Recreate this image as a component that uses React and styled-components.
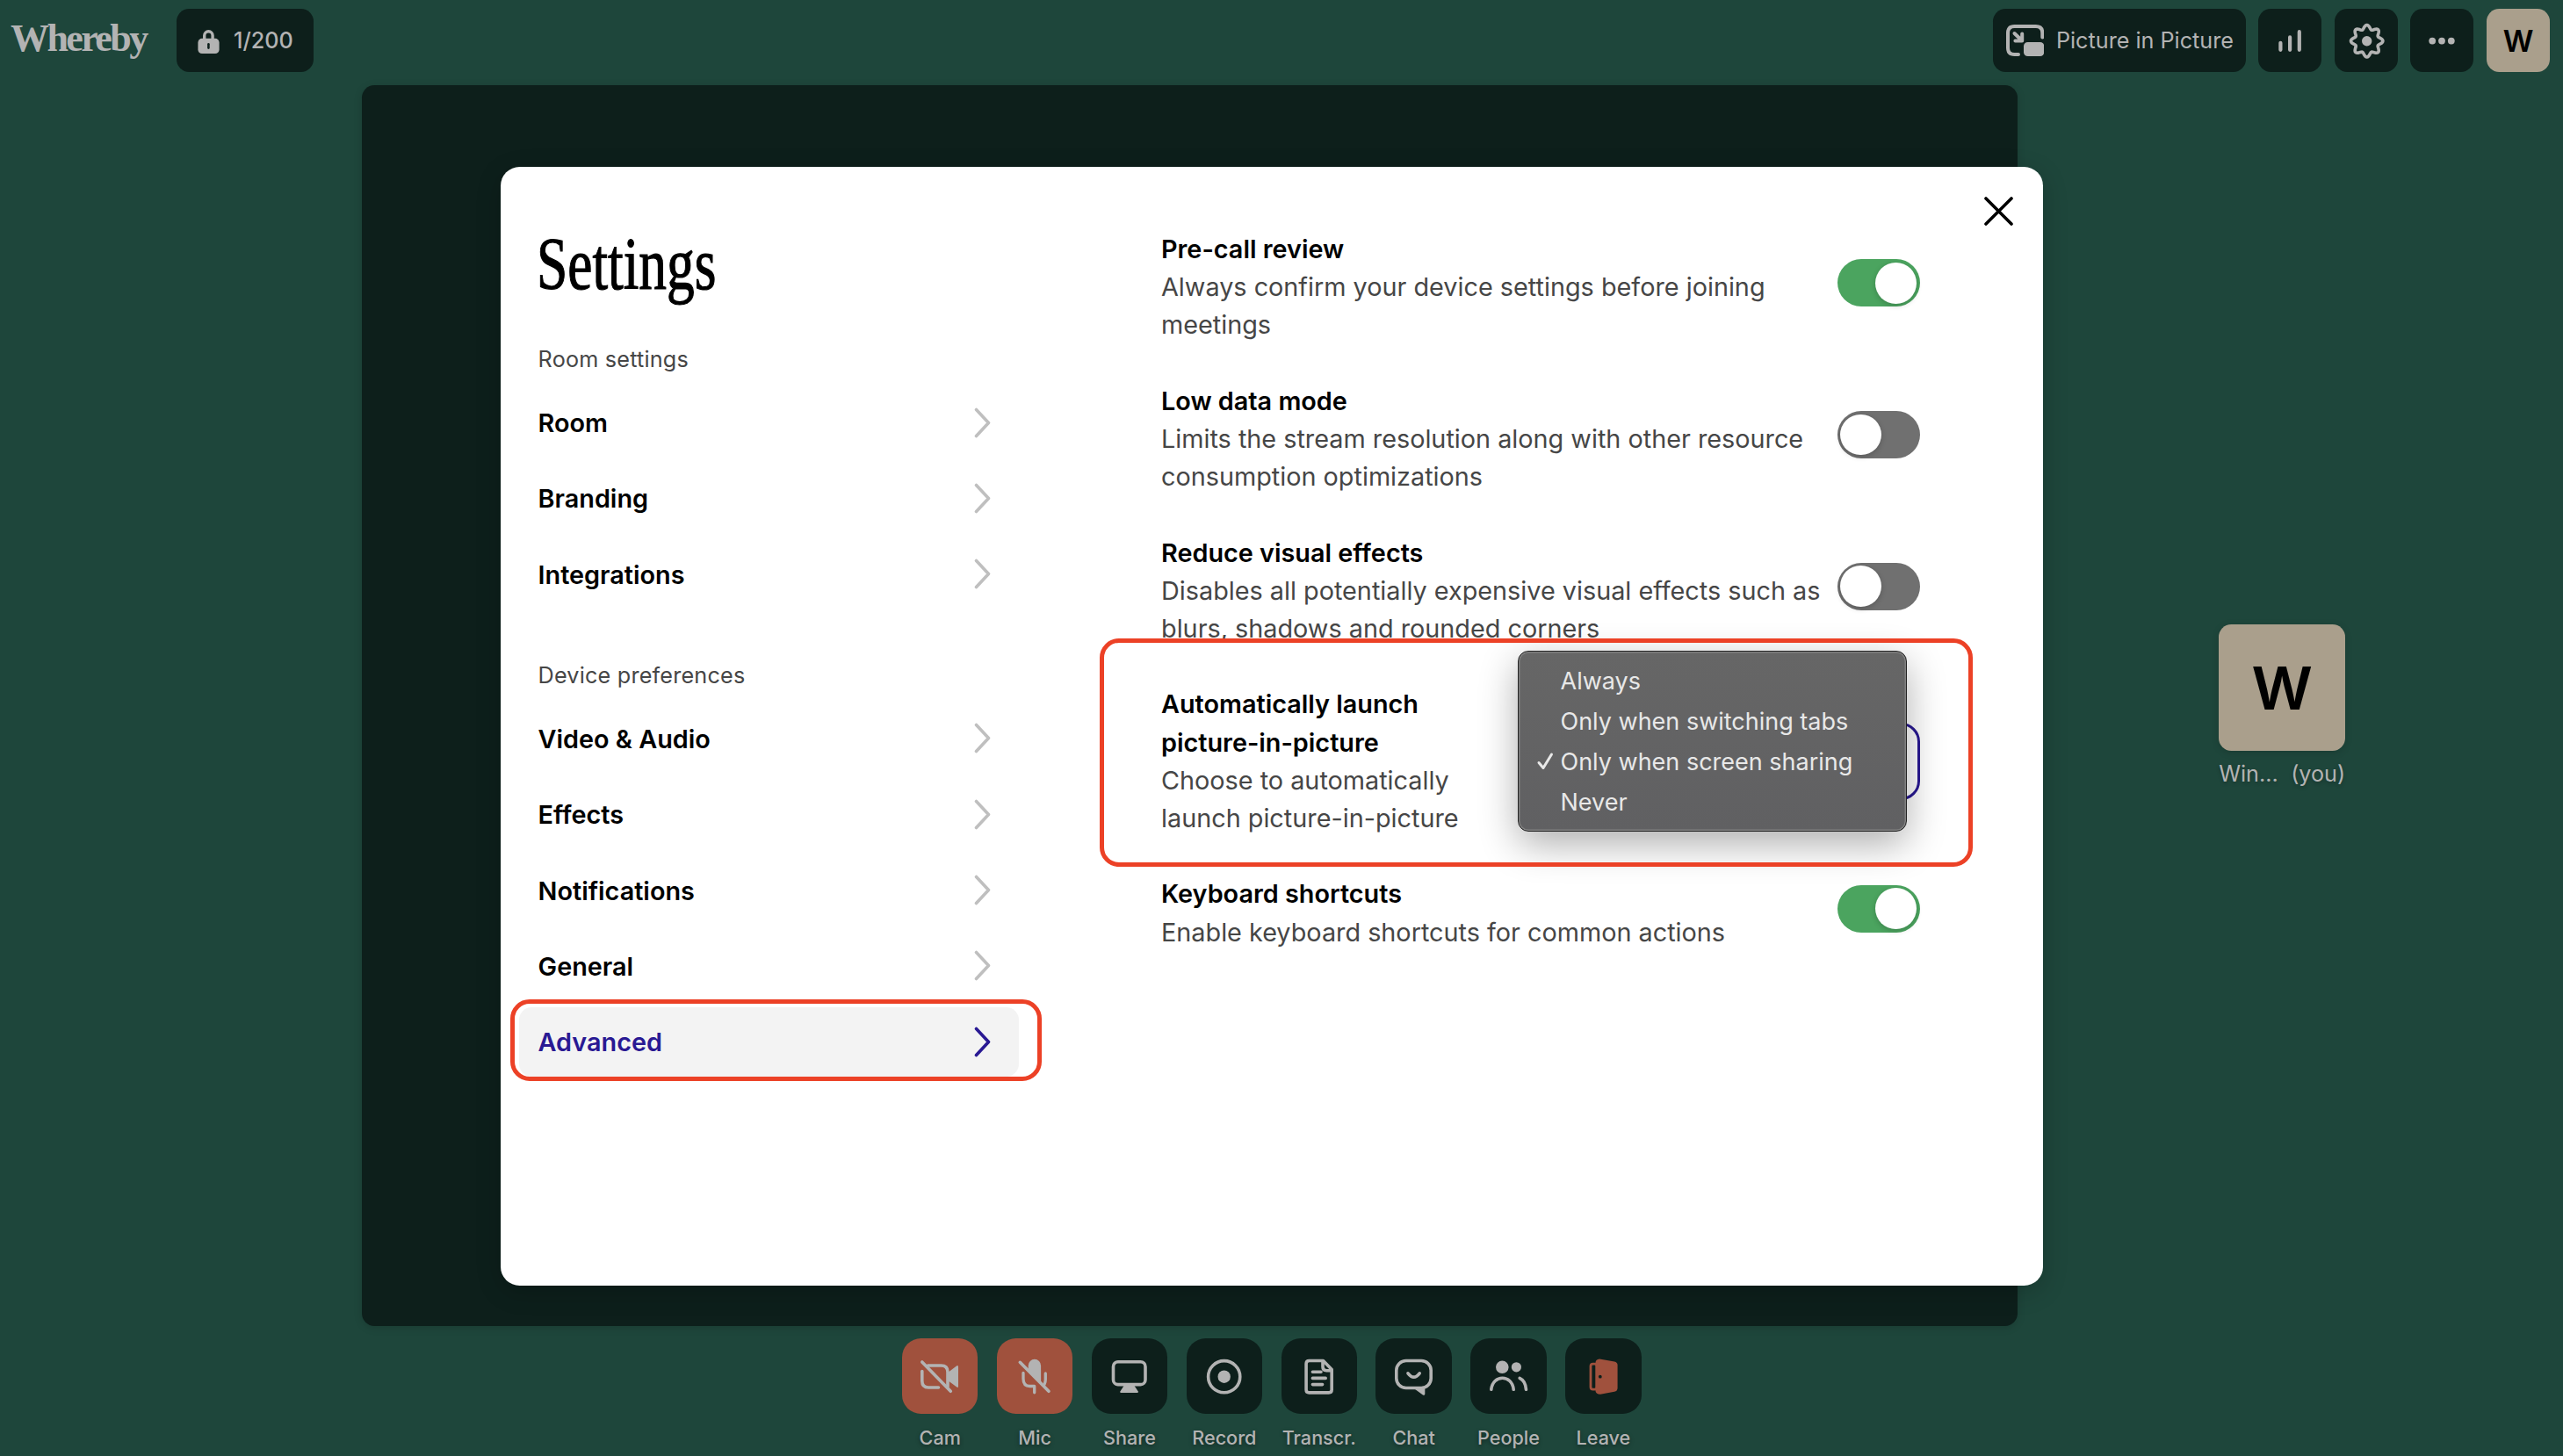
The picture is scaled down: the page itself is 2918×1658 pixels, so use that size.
import React from 'react';
import styled, { createGlobalStyle } from 'styled-components';

const GlobalStyle = createGlobalStyle`
  * {
    box-sizing: border-box;
  }

  body {
    margin: 0;
    background-color: #1e463b;
    font-family: Inter, 'Liberation Sans', sans-serif;
    color: #b3b3b3;
    overflow: hidden;
  }

  svg {
    display: block;
    fill: none;
    stroke-linecap: round;
    stroke-linejoin: round;
  }
`;

const Page = styled.div`
  display: flex;
  flex-direction: column;
  width: 2918px;
  height: 1658px;
`;

/* top bar */

const Header = styled.header`
  display: flex;
  align-items: flex-start;
  height: 97px;
  padding: 10px 15px 0 12px;
`;

const Logo = styled.div`
  width: 189px;
  font-family: 'Liberation Serif', serif;
  font-weight: 700;
  font-size: 44px;
  line-height: 50px;
  letter-spacing: -2.6px;
  margin-top: 9px;
`;

const HeaderButton = styled.div`
  display: flex;
  align-items: center;
  flex: none;
  width: ${props => props.$width || 72}px;
  height: 72px;
  border-radius: 14.4px;
  background-color: #0d1f1b;
  font-size: 25.2px;
  font-weight: ${props => props.$weight || 400};
  white-space: nowrap;
`;

const HeaderActions = styled.div`
  display: flex;
  gap: 14.6px;
  margin-left: auto;
`;

const PipIcon = styled.svg`
  margin: 0 14px 0 15px;
`;

const Avatar = styled.div`
  display: flex;
  align-items: center;
  justify-content: center;
  width: ${props => props.$size}px;
  height: ${props => props.$size}px;
  border-radius: 14.4px;
  background-color: #aa9f8c;
  color: #000;
  font-size: ${props => props.$font}px;
  font-weight: 600;
`;

/* call area */

const Main = styled.main`
  display: flex;
  height: 1413px;
  padding-left: 412px;
`;

const Stage = styled.div`
  width: 1885px;
  border-radius: 14.4px;
  background-color: #0d1f1b;
  box-shadow: 0 2px 10px rgba(0, 0, 0, 0.15);
`;

const Participant = styled.div`
  width: 144px;
  margin: 613.6px 0 0 229.2px;

  ${Avatar} {
    box-shadow: 0 2px 8px rgba(0, 0, 0, 0.15);
  }
`;

const ParticipantName = styled.div`
  display: flex;
  justify-content: space-between;
  margin-top: 8px;
  font-size: 25.2px;
  line-height: 36px;
  white-space: nowrap;
  text-shadow: 0 2px 4px rgba(0, 0, 0, 0.25);
`;

/* bottom toolbar */

const Toolbar = styled.nav`
  display: flex;
  gap: 21.5px;
  padding: 14px 0 0 1027px;
`;

const ToolbarItem = styled.div`
  display: flex;
  flex-direction: column;
  align-items: center;
  width: 86.4px;
`;

const ToolbarTile = styled.div`
  width: 86.4px;
  height: 86.4px;
  border-radius: 21.6px;
  background-color: ${props => (props.$off ? '#a0513d' : '#0d1f1b')};
`;

const ToolbarLabel = styled.span`
  margin-top: 12.5px;
  font-size: 21.6px;
  font-weight: 500;
  line-height: 28px;
  white-space: nowrap;
  text-shadow: 0 2px 5px rgba(0, 0, 0, 0.4);
`;

/* settings dialog */

const Dialog = styled.div`
  position: absolute;
  top: 190px;
  left: 570px;
  display: flex;
  align-items: flex-start;
  width: 1756px;
  height: 1274px;
  border-radius: 21.6px;
  background-color: #fff;
  color: #000;
  box-shadow: 0 7px 29px rgba(0, 0, 0, 0.2);
`;

const Sidebar = styled.aside`
  width: 569px;
  margin: 64px 0 0 21px;
`;

const Title = styled.h1`
  width: 280px;
  height: 136.8px;
  margin: 0 0 0 20px;
  font-family: 'Liberation Serif', serif;
  font-size: 84px;
  font-weight: 400;
  line-height: 93px;
  transform: scaleX(0.755);
  transform-origin: left;
  -webkit-text-stroke: 1.2px #000;
`;

const NavHeading = styled.div`
  margin-bottom: 15.2px;
  padding-left: 21.6px;
  font-size: 25.2px;
  line-height: 36px;
  letter-spacing: 0.2px;
  color: #464646;
`;

const NavList = styled.div`
  display: flex;
  flex-direction: column;
  gap: 7.2px;
  margin-bottom: 56.6px;
`;

const NavItem = styled.div`
  position: relative;
  display: flex;
  align-items: center;
  justify-content: space-between;
  height: 79.2px;
  padding: 0 31px 0 21.6px;
  border-radius: 14.4px;
  background-color: ${props => (props.$active ? '#f3f3f3' : 'transparent')};
  color: ${props => (props.$active ? '#291993' : '#000')};
  font-size: 28.8px;
  font-weight: 600;

  svg {
    stroke: ${props => (props.$active ? '#291993' : '#bfbfbf')};
  }
`;

const Content = styled.section`
  display: flex;
  flex-direction: column;
  gap: 43.2px;
  width: 863.6px;
  margin: 72px 0 0 162px;
`;

const SettingRow = styled.div`
  position: relative;
  display: flex;
  align-items: center;
  justify-content: space-between;
`;

const SettingText = styled.div`
  font-size: 28.8px;
  line-height: 43.2px;
  color: #464646;
  white-space: pre;

  strong {
    display: block;
    font-weight: 600;
    color: #000;
  }
`;

const Switch = styled.div`
  display: flex;
  justify-content: ${props => (props.$on ? 'flex-end' : 'flex-start')};
  width: 94px;
  height: 54px;
  margin-bottom: 9.4px;
  padding: 3.6px;
  border-radius: 27px;
  background-color: ${props => (props.$on ? '#4ba45f' : '#707070')};

  &::after {
    content: '';
    width: 46.8px;
    height: 46.8px;
    border-radius: 50%;
    background-color: #fff;
    box-shadow: 0 2px 6px rgba(0, 0, 0, 0.2);
  }
`;

const SelectBox = styled.div`
  width: 456px;
  height: 88px;
  border: 3px solid #291993;
  border-radius: 21.6px;
`;

const Menu = styled.div`
  position: absolute;
  top: -39.4px;
  left: 405.5px;
  width: 443.5px;
  height: 206px;
  padding: 10px 0;
  border: 1px solid #222;
  border-radius: 12px;
  background: linear-gradient(#666, #606062);
  box-shadow: inset 0 0 0 1.5px #808080, 0 14px 44px rgba(0, 0, 0, 0.32);
  color: #e8e8e8;
`;

const MenuItem = styled.div`
  display: flex;
  align-items: center;
  height: 46px;
  padding-left: 20px;
  font-size: 27px;
  white-space: nowrap;

  svg {
    stroke: #e8e8e8;
  }
`;

const MenuCheck = styled.span`
  flex: none;
  width: 28px;
`;

const CloseButton = styled.div`
  margin: 33.5px 0 0 73.4px;
`;

const Highlight = styled.div`
  position: absolute;
  top: ${props => props.$top}px;
  left: ${props => props.$left}px;
  width: ${props => props.$width}px;
  height: ${props => props.$height}px;
  border: 5px solid #ec4126;
  border-radius: 22px;
`;

const GREY = '#b3b3b3';

// eight lobed outline of the settings cog
const cogPath = () => {
  const points = [];
  for (let deg = 0; deg < 360; deg += 3) {
    const a = (deg * Math.PI) / 180;
    const r = 15.9 + 2.3 * Math.cos(8 * a);
    points.push(`${(36.7 + r * Math.cos(a)).toFixed(2)} ${(36.7 + r * Math.sin(a)).toFixed(2)}`);
  }
  return `M${points.join('L')}Z`;
};

const Chevron = () => (
  <svg width="20" height="36" viewBox="0 0 20 36" strokeWidth="3.6">
    <path d="M2.5 2.5 16.5 17.5 2.5 32.5" />
  </svg>
);

const TileIcon = ({ children }) => (
  <svg width="86.4" height="86.4" viewBox="0 0 86.4 86.4" stroke={GREY} strokeWidth="3.6">
    {children}
  </svg>
);

const tools = [
  {
    label: 'Cam',
    off: true,
    icon: (
      <>
        <path d="M22.8 27 55.3 60.3" />
        <path d="M22.8 37.5V48.5Q22.8 56 30 56H41.5M29.5 31H44.5Q52 31 52 38.5V55" />
        <path d="M51.5 39.5 62.3 31.3Q64 30.5 64 32.5V54.5Q64 56.8 62.3 55.6L51.5 47.5Z" fill={GREY} stroke="none" />
      </>
    ),
  },
  {
    label: 'Mic',
    off: true,
    icon: (
      <>
        <path d="M35.7 36V31A7.2 7.2 0 0 1 50.1 31V51.5Z" fill={GREY} stroke="none" />
        <path d="M26.3 27.3 59 60.3" />
        <path d="M30 39.5V46Q30 54.5 37.5 54.5H42.7V61.8M55.3 40V47Q55.3 50 54 52.5" strokeWidth="3.3" />
      </>
    ),
  },
  {
    label: 'Share',
    icon: (
      <>
        <rect x="24.5" y="26.8" width="36.5" height="25.8" rx="5.4" />
        <path d="M36.5 54H48.5L52.8 60.5Q53.2 62 51.8 62H33.2Q31.8 62 32.4 60.5Z" fill={GREY} stroke="none" />
      </>
    ),
  },
  {
    label: 'Record',
    icon: (
      <>
        <circle cx="42.7" cy="43.7" r="18.1" />
        <circle cx="42.7" cy="43.7" r="7.2" fill={GREY} stroke="none" />
      </>
    ),
  },
  {
    label: 'Transcr.',
    icon: (
      <>
        <path d="M32 25.5H47.5L57.2 35.5V58.5Q57.2 61.9 53.8 61.9H31.5Q28.1 61.9 28.1 58.5V29Q28.1 25.5 31.5 25.5Z" />
        <path d="M47 26V32.5Q47 36.7 51.2 36.7H56.5M35.4 38.2H45M35.4 45.4H50.2M35.4 52.6H46.6" />
      </>
    ),
  },
  {
    label: 'Chat',
    icon: (
      <>
        <rect x="23.8" y="25.5" width="39.4" height="31" rx="11" />
        <path d="M37 39.8Q43.6 48.5 50.2 39.8" />
        <path d="M43 56.5H56.3V63.5Q56 65.5 54 64.6Z" fill={GREY} stroke="none" />
      </>
    ),
  },
  {
    label: 'People',
    icon: (
      <>
        <circle cx="36.3" cy="32.8" r="7.3" fill={GREY} stroke="none" />
        <circle cx="52.4" cy="32.8" r="5.6" fill={GREY} stroke="none" />
        <path d="M23.8 58.3C25.5 40.9 47.6 40.9 49.2 58.3M56.2 45.3Q62.8 48.3 63.5 58.3" />
      </>
    ),
  },
  {
    label: 'Leave',
    icon: (
      <>
        <rect x="29" y="29.2" width="7" height="29" rx="2.6" stroke="#a0513d" strokeWidth="2.8" />
        <path
          d="M34.5 27.5Q34.8 24 39 23.5L56 26.6Q59.6 27.4 59.6 30.5V56.5Q59.6 59.8 56 60.8L40 63.7Q35 63.5 34.5 60Z"
          fill="#a0513d"
          stroke="none"
        />
        <circle cx="39.8" cy="43.7" r="1.9" fill="#0d1f1b" stroke="none" />
      </>
    ),
  },
];

const roomNav = ['Room', 'Branding', 'Integrations'];
const deviceNav = ['Video & Audio', 'Effects', 'Notifications', 'General', 'Advanced'];

const switches = [
  {
    name: 'Pre-call review',
    text: 'Always confirm your device settings before joining\nmeetings',
    on: true,
  },
  {
    name: 'Low data mode',
    text: 'Limits the stream resolution along with other resource\nconsumption optimizations',
    on: false,
  },
  {
    name: 'Reduce visual effects',
    text: 'Disables all potentially expensive visual effects such as\nblurs, shadows and rounded corners',
    on: false,
  },
];

const options = ['Always', 'Only when switching tabs', 'Only when screen sharing', 'Never'];

const TopBar = () => (
  <Header>
    <Logo>Whereby</Logo>
    <HeaderButton $width={156} $weight={500}>
      <svg width="65" height="72" viewBox="0 0 65 72">
        <path d="M31.7 35V30.5A4.7 4.7 0 0 1 41.1 30.5V35" stroke={GREY} strokeWidth="3.4" />
        <rect x="24.4" y="33.8" width="24.2" height="17.2" rx="4.6" fill={GREY} />
        <path d="M36.4 40.2V44.6" stroke="#0d1f1b" strokeWidth="2.6" />
      </svg>
      1/200
    </HeaderButton>
    <HeaderActions>
      <HeaderButton $width={288}>
        <PipIcon width="43.3" height="36" viewBox="0 0 43.3 36" stroke={GREY} strokeWidth="4">
          <path d="M41.3 14.5V9.5Q41.3 2 33.8 2H9.5Q2 2 2 9.5V26.5Q2 34 9.5 34H14" />
          <rect x="20" y="20" width="23.3" height="16" rx="4.6" fill={GREY} stroke="none" />
          <path d="M9.5 10 18 18.2M18.2 10.4V18.4H10.4" />
        </PipIcon>
        Picture in Picture
      </HeaderButton>
      <HeaderButton>
        <svg width="72" height="72" viewBox="0 0 72 72" stroke={GREY} strokeWidth="4.2">
          <path d="M25.4 38.8V46.8M36.1 32.4V46.8M46.8 26.2V46.8" />
        </svg>
      </HeaderButton>
      <HeaderButton>
        <svg width="72" height="72" viewBox="0 0 72 72" stroke={GREY} strokeWidth="3.6">
          <path d={cogPath()} />
          <circle cx="36.7" cy="36.7" r="5.7" fill={GREY} stroke="none" />
        </svg>
      </HeaderButton>
      <HeaderButton>
        <svg width="72" height="72" viewBox="0 0 72 72">
          <g fill={GREY}>
            <circle cx="25.2" cy="36.6" r="3.9" />
            <circle cx="36" cy="36.6" r="3.9" />
            <circle cx="46.8" cy="36.6" r="3.9" />
          </g>
        </svg>
      </HeaderButton>
      <Avatar $size={72} $font={34}>W</Avatar>
    </HeaderActions>
  </Header>
);

const Settings = () => (
  <Dialog>
    <Sidebar>
      <Title>Settings</Title>
      <NavHeading>Room settings</NavHeading>
      <NavList>
        {roomNav.map(name => (
          <NavItem key={name}>
            {name}
            <Chevron />
          </NavItem>
        ))}
      </NavList>
      <NavHeading>Device preferences</NavHeading>
      <NavList>
        {deviceNav.map(name => (
          <NavItem key={name} $active={name === 'Advanced'}>
            {name}
            <Chevron />
            {name === 'Advanced' && <Highlight $top={-9} $left={-10} $width={605} $height={93} />}
          </NavItem>
        ))}
      </NavList>
    </Sidebar>
    <Content>
      {switches.map(item => (
        <SettingRow key={item.name}>
          <SettingText>
            <strong>{item.name}</strong>
            {item.text}
          </SettingText>
          <Switch $on={item.on} />
        </SettingRow>
      ))}
      <SettingRow>
        <SettingText>
          <strong>{'Automatically launch\npicture-in-picture'}</strong>
          {'Choose to automatically\nlaunch picture-in-picture'}
        </SettingText>
        <SelectBox />
        <Menu>
          {options.map(option => (
            <MenuItem key={option}>
              <MenuCheck>
                {option === 'Only when screen sharing' && (
                  <svg width="22" height="22" viewBox="0 0 22 22" strokeWidth="3">
                    <path d="M3 12.5 8 18.5 17.5 3" />
                  </svg>
                )}
              </MenuCheck>
              {option}
            </MenuItem>
          ))}
        </Menu>
        <Highlight $top={-53.4} $left={-70} $width={994} $height={260} />
      </SettingRow>
      <SettingRow>
        <SettingText>
          <strong>Keyboard shortcuts</strong>
          Enable keyboard shortcuts for common actions
        </SettingText>
        <Switch $on />
      </SettingRow>
    </Content>
    <CloseButton>
      <svg width="33" height="33" viewBox="0 0 33 33" stroke="#000" strokeWidth="3.6">
        <path d="M2 2 31 31M31 2 2 31" />
      </svg>
    </CloseButton>
  </Dialog>
);

const App = () => (
  <Page>
    <GlobalStyle />
    <TopBar />
    <Main>
      <Stage />
      <Participant>
        <Avatar $size={144} $font={68}>W</Avatar>
        <ParticipantName>
          <span>Win...</span>
          <span>(you)</span>
        </ParticipantName>
      </Participant>
    </Main>
    <Toolbar>
      {tools.map(tool => (
        <ToolbarItem key={tool.label}>
          <ToolbarTile $off={tool.off}>
            <TileIcon>{tool.icon}</TileIcon>
          </ToolbarTile>
          <ToolbarLabel>{tool.label}</ToolbarLabel>
        </ToolbarItem>
      ))}
    </Toolbar>
    <Settings />
  </Page>
);

export default App;
